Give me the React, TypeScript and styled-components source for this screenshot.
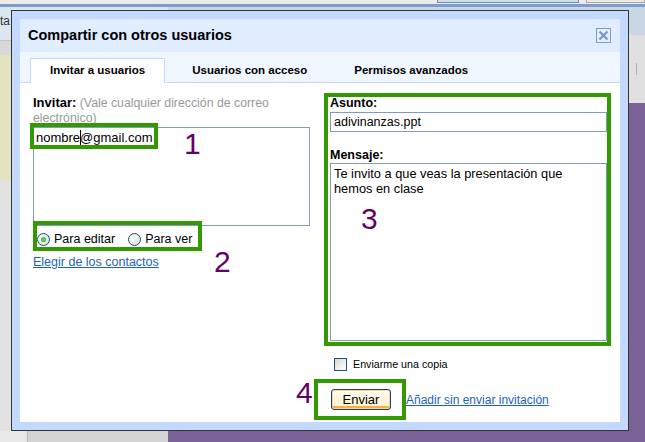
import React from "react";
import styled, { createGlobalStyle } from "styled-components";

const GlobalStyle = createGlobalStyle`
  html, body {
    margin: 0;
    padding: 0;
  }
  body {
    font-family: "Liberation Sans", Arial, sans-serif;
    color: #000;
  }
`;

/* ---------- page behind the dialog ---------- */

const Screen = styled.div`
  position: relative;
  width: 645px;
  height: 442px;
  overflow: hidden;
  display: grid;
  grid-template-rows: 4px 3px 1fr;
  background: #e2e2e2;
`;

const TopStrip = styled.div`
  display: flex;
  justify-content: flex-end;
  gap: 7px;
  background: #ebebeb;
`;

const TopTab = styled.div<{ $w: number; $active?: boolean }>`
  width: ${(p) => p.$w}px;
  height: 3px;
  box-sizing: border-box;
  background: ${(p) => (p.$active ? "#d3deed" : "#e9e9e9")};
  border: 1px solid ${(p) => (p.$active ? "#6a8dbf" : "#a9a9a9")};
  border-top: none;
`;

const BlueBand = styled.div`
  background: #7a9dcb;
`;

const Desktop = styled.div`
  display: grid;
  grid-template-columns: 168px 1fr;
`;

const Sidebar = styled.div`
  display: flex;
  flex-direction: column;
`;

const SideHeader = styled.div`
  height: 33px;
  box-sizing: border-box;
  padding-top: 7px;
  background: #dce6f1;
  font-size: 12px;
  line-height: 14px;
  color: #333;
`;

const SideToolbar = styled.div`
  height: 15px;
  box-sizing: border-box;
  border-top: 1px solid #c4c4c4;
  background: #d9d9d9;
`;

const SideNotes = styled.div`
  height: 125px;
  background: #e4e2c1;
`;

const SideFill = styled.div`
  flex: 1;
  background: #e2e2e2;
`;

const SideFooter = styled.div`
  height: 11px;
  display: grid;
  grid-template-columns: 27px 1px 1fr;
  background: #d4d4d4;

  &::before {
    content: "";
    background: #e8e8e8;
  }
  &::after {
    content: "";
    background: #b8b8b8;
    grid-column: 2;
    grid-row: 1;
  }
`;

const Main = styled.div`
  display: flex;
  flex-direction: column;
`;

const MainHeader = styled.div`
  height: 28px;
  background: #c9d6e3;
`;

const MainToolbar = styled.div`
  height: 68px;
  background: #e0e0e0;
  display: flex;
  justify-content: flex-end;
  align-items: center;
  padding-right: 8px;
`;

const ToolbarDivider = styled.div`
  width: 1px;
  height: 12px;
  background: #b0b0b0;
`;

const Canvas = styled.div`
  flex: 1;
  background: #7b6296;
`;

/* ---------- dialog ---------- */

const Dialog = styled.div`
  position: absolute;
  left: 11px;
  top: 10px;
  width: 618px;
  height: 421px;
  box-sizing: border-box;
  border: 1px solid #333;
  padding: 8px;
  background: #c3d9ff;
`;

const Panel = styled.div`
  height: 100%;
  display: flex;
  flex-direction: column;
  background: #fff;
`;

const TitleBar = styled.div`
  height: 33px;
  flex: none;
  display: flex;
  align-items: center;
  justify-content: space-between;
  padding: 0 9px 0 8px;
  background: #e0ecff;
`;

const Title = styled.h1`
  margin: 0;
  font-size: 14.5px;
  line-height: 33px;
  font-weight: bold;
`;

const CloseButton = styled.button`
  width: 15px;
  height: 15px;
  padding: 0;
  border: 1px solid #7f9bc6;
  background: #e8f0fd;
  display: flex;
  align-items: center;
  justify-content: center;
  cursor: pointer;
`;

const TabStrip = styled.div`
  flex: none;
  display: flex;
  gap: 7px;
  padding: 6px 10px 0;
  background: #f0f6ff;
  border-bottom: 1px solid #c3d9ff;
`;

const Tab = styled.div<{ $active?: boolean }>`
  box-sizing: border-box;
  padding: 0 19px;
  font-size: 11.5px;
  font-weight: bold;
  line-height: 23px;
  white-space: nowrap;
  border: 1px solid ${(p) => (p.$active ? "#c3d9ff" : "transparent")};
  border-bottom: none;
  background: ${(p) => (p.$active ? "#fff" : "transparent")};
  margin-bottom: ${(p) => (p.$active ? "-1px" : "0")};
  height: ${(p) => (p.$active ? "25px" : "24px")};
`;

const Body = styled.div`
  flex: 1;
  display: flex;
  gap: 20px;
  padding: 12px 13px 0;
`;

const Column = styled.div`
  width: 277px;
  display: flex;
  flex-direction: column;
`;

const InviteLabel = styled.div`
  font-size: 12.3px;
  line-height: 15px;
  color: #999;
  min-height: 30px;
  white-space: nowrap;

  strong {
    font-size: 13px;
    color: #000;
  }
`;

const EmailBox = styled.div`
  margin-top: 1px;
  height: 99px;
  box-sizing: border-box;
  border: 1px solid #7f9db9;
  padding: 2px 2px;
  font-size: 13px;
  line-height: 16px;
`;

const Caret = styled.span`
  display: inline-block;
  width: 1px;
  height: 15px;
  margin-right: -1px;
  vertical-align: -3px;
  background: #000;
`;

const RadioRow = styled.div`
  margin-top: 5px;
  display: flex;
  align-items: center;
  padding-left: 4px;
  font-size: 12.5px;
  line-height: 16px;
`;

const RadioLabel = styled.label`
  display: flex;
  align-items: center;
  gap: 4px;
  margin-right: 13px;
`;

const Radio = styled.span<{ $checked?: boolean }>`
  width: 13px;
  height: 13px;
  box-sizing: border-box;
  border-radius: 50%;
  border: 1px solid #1c5180;
  background: radial-gradient(circle at 35% 35%, #ffffff, #d6d6ce);
  display: inline-flex;
  align-items: center;
  justify-content: center;

  &::after {
    content: "";
    width: 5px;
    height: 5px;
    border-radius: 50%;
    background: ${(p) =>
      p.$checked ? "radial-gradient(circle, #6fe06f, #1f9a1f)" : "transparent"};
  }
`;

const Link = styled.a`
  font-size: 12.5px;
  line-height: 14px;
  color: #1e5fc8;
  text-decoration: underline;
  cursor: pointer;
`;

const ContactsLink = styled(Link)`
  margin-top: 8px;
  align-self: flex-start;
`;

const ActionLink = styled(Link)`
  font-size: 12px;
`;

const FieldLabel = styled.div<{ $gap: number }>`
  margin-top: ${(p) => p.$gap}px;
  font-size: 12.5px;
  font-weight: bold;
  line-height: 14px;
`;

const TextInput = styled.input`
  margin-top: 2px;
  height: 20px;
  box-sizing: border-box;
  border: 1px solid #7f9db9;
  padding: 0 3px;
  font-family: "Liberation Sans", Arial, sans-serif;
  font-size: 12.5px;
  outline: none;
`;

const MessageArea = styled.textarea`
  margin-top: 1px;
  height: 178px;
  box-sizing: border-box;
  border: 1px solid #7f9db9;
  padding: 2px 3px;
  font-family: "Liberation Sans", Arial, sans-serif;
  font-size: 12.8px;
  line-height: 15px;
  resize: none;
  outline: none;
`;

const CheckRow = styled.label`
  margin-top: 16px;
  padding-left: 4px;
  display: flex;
  align-items: center;
  gap: 6px;
  font-size: 10.7px;
  line-height: 14px;
`;

const Checkbox = styled.span`
  width: 13px;
  height: 13px;
  box-sizing: border-box;
  border: 1px solid #1c5180;
  background: linear-gradient(135deg, #d9d9d2, #ffffff);
`;

const ActionRow = styled.div`
  margin-top: 18px;
  padding-left: 1px;
  display: flex;
  align-items: center;
  gap: 15px;
`;

const SendButton = styled.button`
  width: 60px;
  height: 21px;
  box-sizing: border-box;
  padding: 0;
  border: 1px solid #1f3f6e;
  border-radius: 3px;
  background: linear-gradient(#fffdf4, #fdf0cc);
  box-shadow: inset 0 0 0 1px #fbd68a, inset 0 -2px 0 1px #f4b13d;
  font-family: "Liberation Sans", Arial, sans-serif;
  font-size: 13px;
  color: #000;
  cursor: pointer;
`;

/* ---------- annotations drawn over the screenshot ---------- */

const Mark = styled.div<{ $x: number; $y: number; $w: number; $h: number }>`
  position: absolute;
  left: ${(p) => p.$x}px;
  top: ${(p) => p.$y}px;
  width: ${(p) => p.$w}px;
  height: ${(p) => p.$h}px;
  box-sizing: border-box;
  border: 4px solid #339900;
  pointer-events: none;
`;

const StepNumber = styled.div<{ $x: number; $y: number }>`
  position: absolute;
  left: ${(p) => p.$x}px;
  top: ${(p) => p.$y}px;
  font-family: "Liberation Sans", Arial, sans-serif;
  font-size: 30px;
  line-height: 30px;
  color: #660066;
`;

const marks = [
  { x: 30, y: 123, w: 128, h: 26 },
  { x: 33, y: 221, w: 169, h: 30 },
  { x: 324, y: 93, w: 287, h: 253 },
  { x: 314, y: 379, w: 92, h: 41 },
];

const steps = [
  { n: "1", x: 184, y: 129 },
  { n: "2", x: 214, y: 247 },
  { n: "3", x: 361, y: 204 },
  { n: "4", x: 296, y: 378 },
];

export default function App() {
  return (
    <>
      <GlobalStyle />
      <Screen>
        <TopStrip>
          <TopTab $w={142} $active />
          <TopTab $w={59} />
        </TopStrip>
        <BlueBand />
        <Desktop>
          <Sidebar>
            <SideHeader>ta</SideHeader>
            <SideToolbar />
            <SideNotes />
            <SideFill />
            <SideFooter />
          </Sidebar>
          <Main>
            <MainHeader />
            <MainToolbar>
              <ToolbarDivider />
            </MainToolbar>
            <Canvas />
          </Main>
        </Desktop>

        <Dialog>
          <Panel>
            <TitleBar>
              <Title>Compartir con otros usuarios</Title>
              <CloseButton aria-label="Cerrar">
                <svg width="11" height="11" viewBox="0 0 11 11">
                  <path
                    d="M1.5 1.5 L9.5 9.5 M9.5 1.5 L1.5 9.5"
                    stroke="#7a96c2"
                    strokeWidth="2.2"
                  />
                </svg>
              </CloseButton>
            </TitleBar>
            <TabStrip>
              <Tab $active>Invitar a usuarios</Tab>
              <Tab>Usuarios con acceso</Tab>
              <Tab>Permisos avanzados</Tab>
            </TabStrip>
            <Body>
              <Column>
                <InviteLabel>
                  <strong>Invitar:</strong> (Vale cualquier dirección de correo
                  <br />
                  electrónico)
                </InviteLabel>
                <EmailBox>
                  nombre
                  <Caret />
                  @gmail.com
                </EmailBox>
                <RadioRow>
                  <RadioLabel>
                    <Radio $checked />
                    Para editar
                  </RadioLabel>
                  <RadioLabel>
                    <Radio />
                    Para ver
                  </RadioLabel>
                </RadioRow>
                <ContactsLink>Elegir de los contactos</ContactsLink>
              </Column>
              <Column>
                <FieldLabel $gap={1}>Asunto:</FieldLabel>
                <TextInput readOnly value="adivinanzas.ppt" />
                <FieldLabel $gap={16}>Mensaje:</FieldLabel>
                <MessageArea
                  readOnly
                  value={"Te invito a que veas la presentación que\nhemos en clase"}
                />
                <CheckRow>
                  <Checkbox />
                  Enviarme una copia
                </CheckRow>
                <ActionRow>
                  <SendButton>Enviar</SendButton>
                  <ActionLink>Añadir sin enviar invitación</ActionLink>
                </ActionRow>
              </Column>
            </Body>
          </Panel>
        </Dialog>

        {marks.map((m, i) => (
          <Mark key={i} $x={m.x} $y={m.y} $w={m.w} $h={m.h} />
        ))}
        {steps.map((s) => (
          <StepNumber key={s.n} $x={s.x} $y={s.y}>
            {s.n}
          </StepNumber>
        ))}
      </Screen>
    </>
  );
}
